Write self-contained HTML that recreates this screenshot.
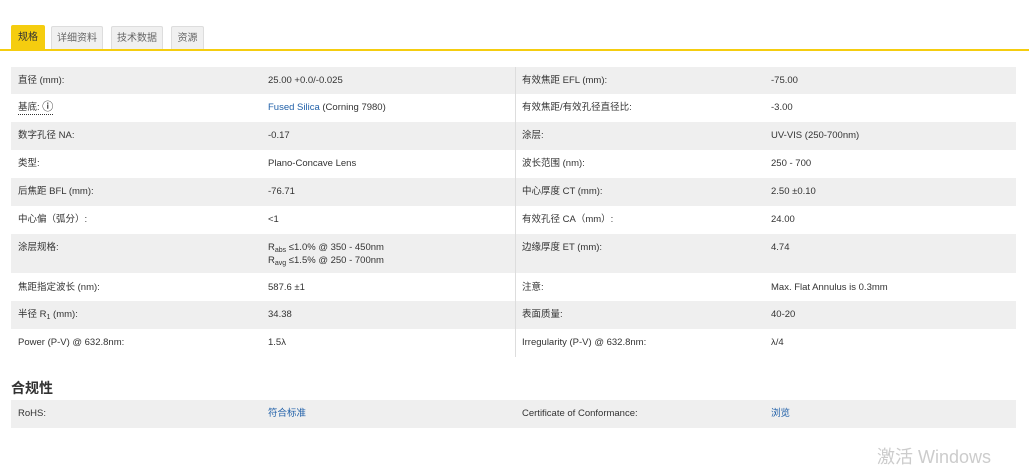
<!DOCTYPE html>
<html><head><meta charset="utf-8"><style>
body{margin:0;width:1029px;height:456px;overflow:hidden;background:#fff;font-family:"Liberation Sans","Noto Sans CJK SC",sans-serif;font-size:9.5px;color:#333;position:relative}
.tab{position:absolute;top:26px;height:23px;line-height:24px;font-size:10px;text-align:center;background:#f0f0f0;border:1px solid #ddd;border-bottom:none;color:#666;border-radius:2px 2px 0 0;box-sizing:border-box}
.tab.on{background:#f5cd0f;border-color:#f5cd0f;color:#333;top:25px;height:25px}
.line{position:absolute;top:49px;left:0;width:1029px;height:2px;background:#f5cd0f}
.row{position:absolute;left:11px;width:1005px}
.row.g{background:#efefef}
.c{position:absolute;top:0}
.a{left:7px}.b{left:257px}.d{left:511px}.e{left:760px}
a{color:#1f5fa8;text-decoration:none}
.vl{position:absolute;left:515px;top:67px;width:1px;height:290px;background:#ddd}
h3{position:absolute;left:11px;top:378px;margin:0;font-size:14px;font-weight:bold;color:#333}
sub{font-size:7px;line-height:0;vertical-align:-2px}
</style></head><body>
<div class="tab on" style="left:11px;width:34px">规格</div>
<div class="tab" style="left:51px;width:52px">详细资料</div>
<div class="tab" style="left:111px;width:52px">技术数据</div>
<div class="tab" style="left:171px;width:33px">资源</div>
<div class="line"></div>

<div class="row g" style="top:67px;height:27px;line-height:27px"><span class="c a">直径 (mm):</span><span class="c b">25.00 +0.0/-0.025</span><span class="c d">有效焦距 EFL (mm):</span><span class="c e">-75.00</span></div>
<div class="row" style="top:94px;height:28px;line-height:28px"><span class="c a"><span style="border-bottom:1px dotted #333;line-height:12px;display:inline-block">基底: <b style="font-size:11px">ⓘ</b></span></span><span class="c b"><a>Fused Silica</a> (Corning 7980)</span><span class="c d">有效焦距/有效孔径直径比:</span><span class="c e">-3.00</span></div>
<div class="row g" style="top:122px;height:28px;line-height:28px"><span class="c a">数字孔径 NA:</span><span class="c b">-0.17</span><span class="c d">涂层:</span><span class="c e">UV-VIS (250-700nm)</span></div>
<div class="row" style="top:150px;height:28px;line-height:28px"><span class="c a">类型:</span><span class="c b">Plano-Concave Lens</span><span class="c d">波长范围 (nm):</span><span class="c e">250 - 700</span></div>
<div class="row g" style="top:178px;height:28px;line-height:28px"><span class="c a">后焦距 BFL (mm):</span><span class="c b">-76.71</span><span class="c d">中心厚度 CT (mm):</span><span class="c e">2.50 ±0.10</span></div>
<div class="row" style="top:206px;height:28px;line-height:28px"><span class="c a">中心偏（弧分）:</span><span class="c b">&lt;1</span><span class="c d">有效孔径 CA（mm）:</span><span class="c e">24.00</span></div>
<div class="row g" style="top:234px;height:39px;line-height:13px"><span class="c a" style="top:7px">涂层规格:</span><span class="c b" style="top:7px">R<sub>abs</sub> ≤1.0% @ 350 - 450nm<br>R<sub>avg</sub> ≤1.5% @ 250 - 700nm</span><span class="c d" style="top:7px">边缘厚度 ET (mm):</span><span class="c e" style="top:7px">4.74</span></div>
<div class="row" style="top:273px;height:28px;line-height:30px"><span class="c a">焦距指定波长 (nm):</span><span class="c b">587.6 ±1</span><span class="c d">注意:</span><span class="c e">Max. Flat Annulus is 0.3mm</span></div>
<div class="row g" style="top:301px;height:28px;line-height:28px"><span class="c a">半径 R<sub>1</sub> (mm):</span><span class="c b">34.38</span><span class="c d">表面质量:</span><span class="c e">40-20</span></div>
<div class="row" style="top:329px;height:28px;line-height:28px"><span class="c a">Power (P-V) @ 632.8nm:</span><span class="c b">1.5λ</span><span class="c d">Irregularity (P-V) @ 632.8nm:</span><span class="c e">λ/4</span></div>
<div class="vl"></div>

<h3>合规性</h3>
<div class="row g" style="top:400px;height:28px;line-height:28px"><span class="c a">RoHS:</span><span class="c b"><a>符合标准</a></span><span class="c d">Certificate of Conformance:</span><span class="c e"><a>浏览</a></span></div>
<div style="position:absolute;left:877px;top:447px;font-size:18px;line-height:20px;color:#ccc">激活 Windows</div>
</body></html>
